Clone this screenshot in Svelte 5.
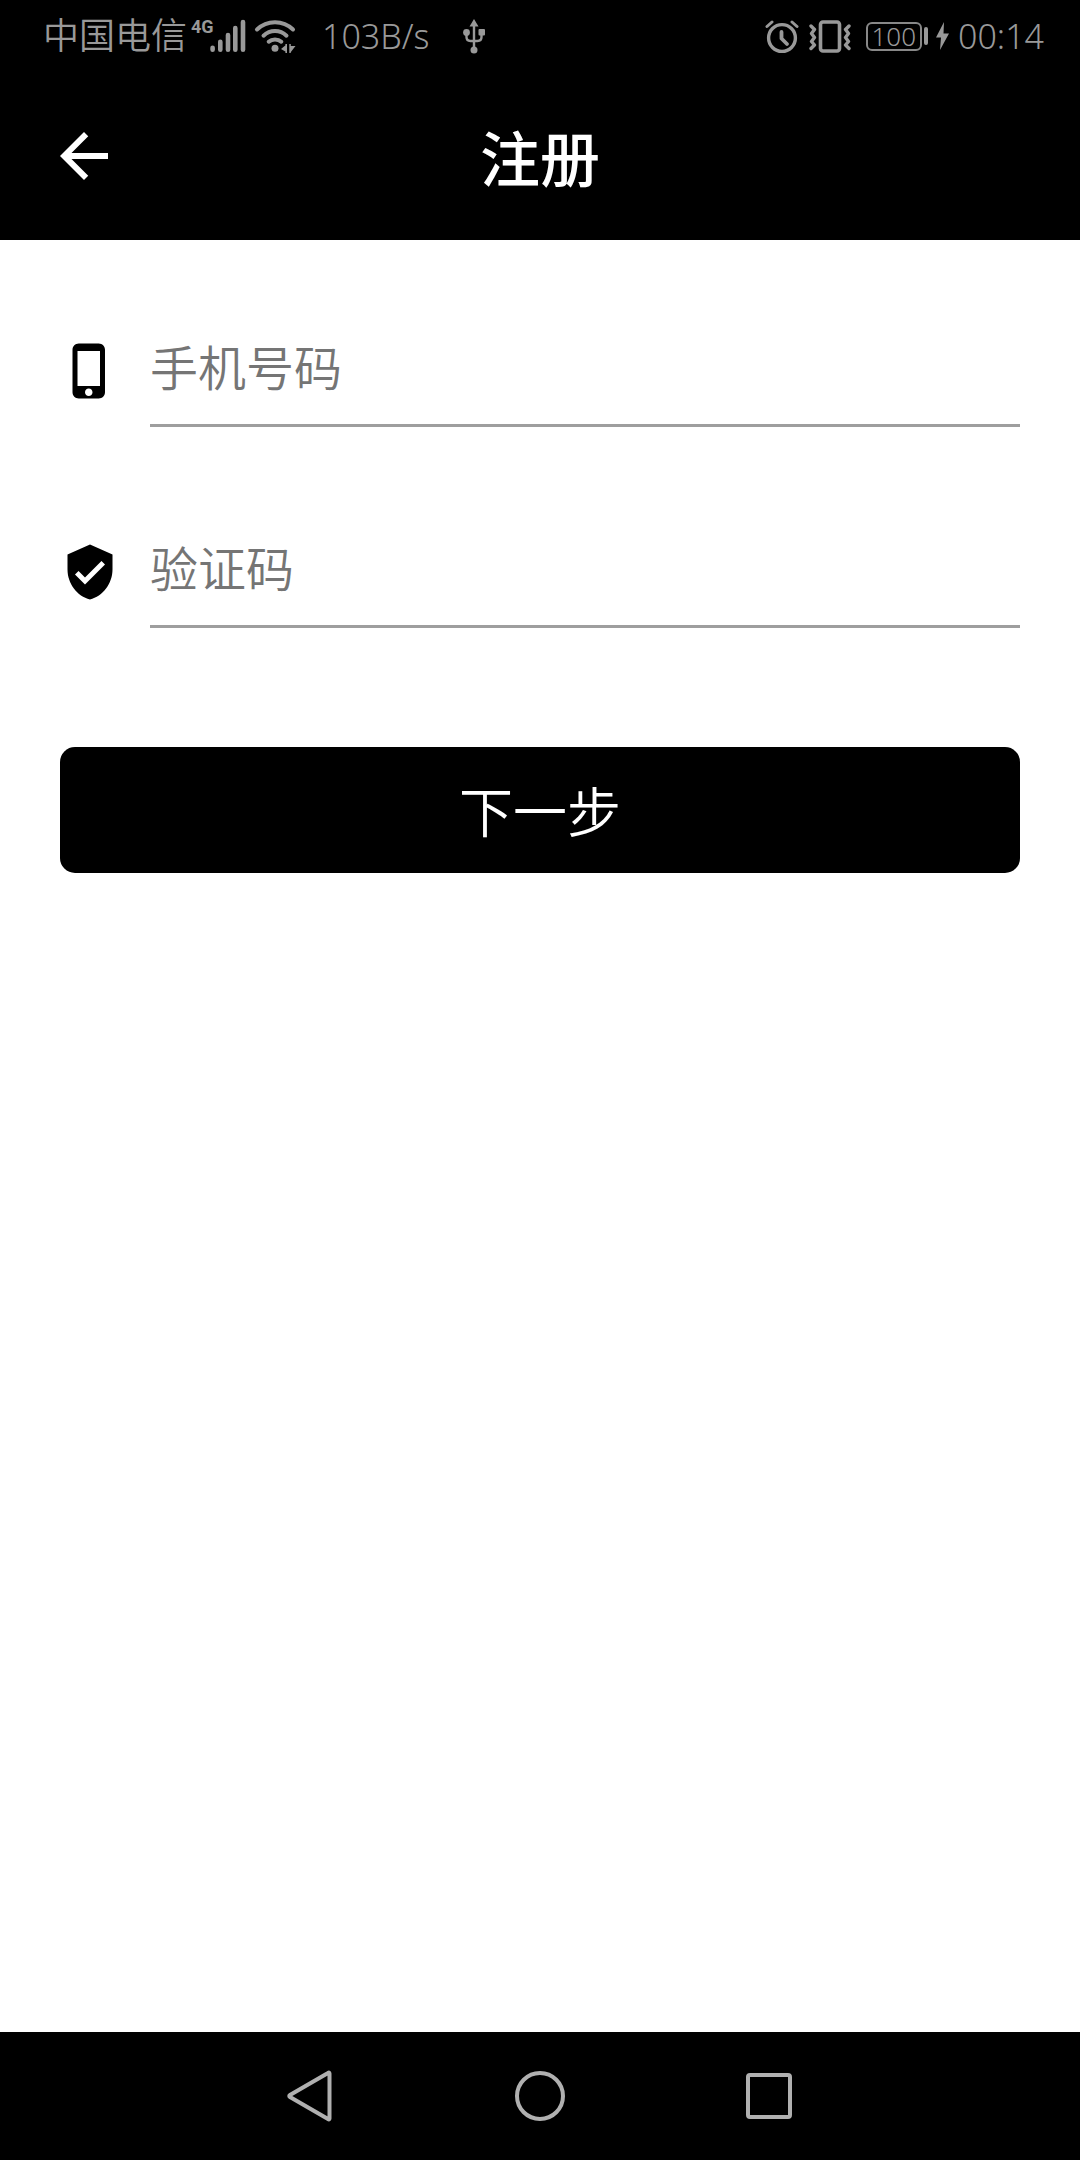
<script>
  let phone = $state('');
  let code = $state('');
</script>

<div class="screen">
  <div class="status">
    <div class="group">
      <span class="carrier">中国电信</span>
      <span class="network">4G</span>
      <svg class="signal" width="36" height="36" viewBox="0 0 36 36" aria-hidden="true">
        <g stroke="currentColor" stroke-width="4.6" stroke-linecap="round">
          <path d="M2.6 29.8V31.7M10.3 23.7V31.7M18 17V31.7M25.3 10V31.7M33 4V31.7" />
        </g>
      </svg>
      <svg class="wifi" width="42" height="36" viewBox="0 0 42 36" aria-hidden="true">
        <g fill="none" stroke="currentColor" stroke-width="4" stroke-linecap="round">
          <path d="M3 11.5C13 1.8 29 1.8 39 11.5" />
          <path d="M9.5 17.7C16 11.4 26 11.4 32.5 17.7" />
          <path d="M14.7 23.7C18 20.6 24 20.6 27.3 23.7" />
        </g>
        <circle cx="21" cy="30.3" r="3.5" fill="currentColor" />
        <path d="M27 31L33 26V34.5ZM35.5 28H41.5L36.5 34.5ZM31.4 26H33V35H31.4ZM35.3 26H36.8V35H35.3Z" fill="currentColor" />
      </svg>
      <span class="speed">103B/s</span>
      <svg class="usb" width="24" height="36" viewBox="0 0 24 36" aria-hidden="true">
        <path d="M12 7V30M4.5 15V19Q4.5 23 8.5 23H15.5Q19.5 23 19.5 19V15" fill="none" stroke="currentColor" stroke-width="2.4" />
        <path d="M12 1L16.5 8.5H7.5Z" fill="currentColor" />
        <circle cx="4.5" cy="14.5" r="3.4" fill="currentColor" />
        <circle cx="12" cy="32" r="3.5" fill="currentColor" />
        <rect x="16.5" y="11" width="6.5" height="6.5" rx="1" fill="currentColor" />
      </svg>
    </div>
    <div class="group">
      <svg class="alarm" width="34" height="36" viewBox="0 0 34 36" aria-hidden="true">
        <g fill="none" stroke="currentColor" stroke-linecap="round">
          <circle cx="17" cy="20" r="13.4" stroke-width="3.4" />
          <path d="M16.5 14V20.5L22 26" stroke-width="3.8" stroke-linejoin="round" />
          <path d="M2 8.5L7 4M27 4L32 8.5" stroke-width="3" />
        </g>
      </svg>
      <svg class="vibrate" width="42" height="36" viewBox="0 0 42 36" aria-hidden="true">
        <g fill="none" stroke="currentColor" stroke-linejoin="round" stroke-linecap="round">
          <rect x="11.5" y="4" width="19" height="29" rx="2.5" stroke-width="3.6" />
          <path d="M2 8L5.5 11.5L2.5 15.5L5.5 19.5L2.5 23.500L5.5 27L2 30.500" stroke-width="3.400" />
          <path d="M40 8L36.500 11.500L39.500 15.500L36.500 19.500L39.500 23.500L36.500 27L40 30.500" stroke-width="3.400" />
        </g>
      </svg>
      <span class="battery"><span class="level">100</span><span class="cap"></span></span>
      <svg class="bolt" width="13" height="28" viewBox="0 0 13 28" aria-hidden="true">
        <path d="M8 0L0 15.500H5L4 28L13 11.500H7.500Z" fill="currentColor" />
      </svg>
      <span class="time">00:14</span>
    </div>
  </div>

  <header>
    <button class="back" type="button" aria-label="返回">
      <svg width="72" height="72" viewBox="0 0 24 24" aria-hidden="true">
        <path d="M20 11H7.830l5.590-5.590L12 4l-8 8 8 8 1.410-1.410L7.830 13H20v-2z" fill="currentColor" />
      </svg>
    </button>
    <h1>注册</h1>
  </header>

  <form onsubmit={(e) => e.preventDefault()}>
    <div class="field">
      <label for="phone" aria-label="手机号码">
        <svg width="60" height="60" viewBox="0 0 24 24" aria-hidden="true">
          <path d="M15.500 1h-8C6.120 1 5 2.120 5 3.500v17C5 21.880 6.120 23 7.500 23h8c1.380 0 2.500-1.120 2.500-2.500v-17C18 2.120 16.880 1 15.500 1zm-4 21c-.83 0-1.500-.67-1.500-1.500s.67-1.500 1.500-1.500 1.500.67 1.500 1.500-.67 1.500-1.500 1.500zm4.500-4H7V4h9v14z" />
        </svg>
      </label>
      <input id="phone" type="tel" placeholder="手机号码" bind:value={phone} />
    </div>
    <div class="field">
      <label for="code" aria-label="验证码">
        <svg width="60" height="60" viewBox="0 0 24 24" aria-hidden="true">
          <path d="M12 1L3 5v6c0 5.550 3.840 10.740 9 12 5.160-1.260 9-6.450 9-12V5l-9-4zm-2 16l-4-4 1.410-1.410L10 14.170l6.590-6.590L18 9l-8 8z" />
        </svg>
      </label>
      <input id="code" type="text" inputmode="numeric" placeholder="验证码" bind:value={code} />
    </div>
    <button class="next" type="submit">下一步</button>
  </form>

  <nav>
    <button type="button" aria-label="返回上一页">
      <svg width="52" height="52" viewBox="0 0 52 52" aria-hidden="true">
        <path d="M44.500 3.500V48.500Q44.500 50 43 49L5 27Q3.500 26 5 25L43 3Q44.500 2 44.500 3.500Z" />
      </svg>
    </button>
    <button type="button" aria-label="主屏幕">
      <svg width="52" height="52" viewBox="0 0 52 52" aria-hidden="true">
        <circle cx="26" cy="26" r="23" />
      </svg>
    </button>
    <button type="button" aria-label="最近任务">
      <svg width="52" height="52" viewBox="0 0 52 52" aria-hidden="true">
        <rect x="5" y="5" width="42" height="42" rx="2" />
      </svg>
    </button>
  </nav>
</div>

<style>
  :global(body) {
    margin: 0;
    background: #fff;
  }

  .screen {
    display: flex;
    flex-direction: column;
    min-height: 100vh;
    font-family: 'Noto Sans', 'Noto Sans CJK SC', sans-serif;
  }

  button,
  input {
    font-family: inherit;
    border: 0;
    padding: 0;
    margin: 0;
    background: none;
  }

  svg {
    display: block;
    flex: none;
  }

  .status {
    display: flex;
    justify-content: space-between;
    height: 72px;
    padding: 0 36px 0 43px;
    background: #000;
    color: #999;
    font-size: 34px;
    font-weight: 300;
    line-height: 76px;
    white-space: nowrap;
  }

  .group {
    display: flex;
    align-items: center;
    height: 72px;
  }

  .carrier {
    font-size: 36px;
    font-weight: 350;
  }

  .network {
    align-self: flex-start;
    width: 19px;
    margin: 17px 0 0 4px;
    font: bold 18px/20px 'Liberation Sans Narrow', 'Roboto', sans-serif;
  }

  .wifi {
    margin-left: 8px;
  }

  .speed {
    margin-left: 26px;
  }

  .usb {
    margin-left: 32px;
  }

  .vibrate {
    margin-left: 10px;
  }

  .battery {
    display: flex;
    align-items: center;
    gap: 2px;
    margin-left: 15px;
  }

  .level {
    border: 2px solid #888;
    border-radius: 6px;
    padding: 0 4px;
    font-size: 26px;
    line-height: 25px;
  }

  .cap {
    width: 4px;
    height: 18px;
    border-radius: 2px;
    background: #999;
  }

  .bolt {
    margin: 0 9px 0 8px;
  }

  header {
    display: grid;
    grid-template-columns: 1fr auto 1fr;
    align-items: center;
    height: 168px;
    padding: 0 48px;
    background: #000;
    color: #fff;
  }

  .back {
    justify-self: start;
    color: #fff;
  }

  h1 {
    margin: 0;
    padding-top: 6px;
    font-size: 60px;
    font-weight: 500;
    line-height: 80px;
  }

  form {
    padding: 90px 60px;
  }

  .field {
    display: flex;
    gap: 30px;
    margin-bottom: 104px;
  }

  label {
    padding-top: 11px;
  }

  input {
    flex: 1;
    min-width: 0;
    height: 72px;
    padding: 2px 0 20px;
    border-bottom: 3px solid #9e9e9e;
    border-radius: 0;
    outline: none;
    color: #212121;
    font-size: 48px;
    font-weight: 350;
    line-height: 72px;
  }

  input::placeholder {
    color: #757575;
    opacity: 1;
  }

  .next {
    display: block;
    width: 100%;
    height: 126px;
    margin-top: 119px;
    padding-bottom: 2px;
    border-radius: 15px;
    background: #000;
    color: #fff;
    font-size: 54px;
    font-weight: 350;
  }

  nav {
    display: grid;
    grid-template-columns: repeat(3, 1fr);
    height: 128px;
    margin-top: auto;
    padding: 0 18.2%;
    background: #000;
  }

  nav button {
    display: flex;
    align-items: center;
    justify-content: center;
  }

  nav svg {
    fill: none;
    stroke: #b0b0b0;
    stroke-width: 4;
  }
</style>
